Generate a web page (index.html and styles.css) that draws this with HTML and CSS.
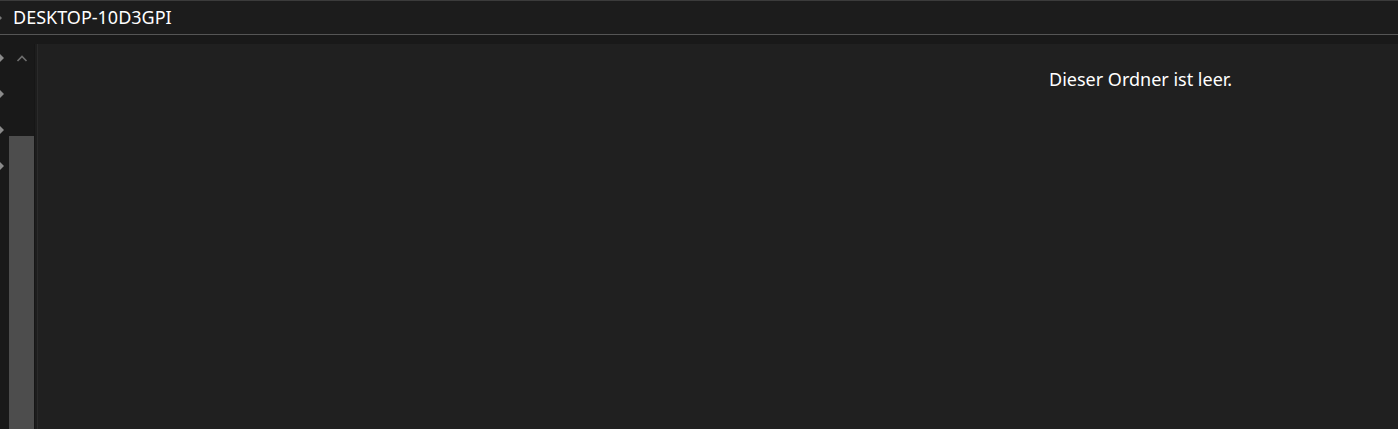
FILE: index.html
```html
<!DOCTYPE html>
<html lang="de">
<head>
<meta charset="utf-8">
<link rel="stylesheet" href="styles.css">
</head>
<body>
<div class="window">
  <div class="titlebar">
    <span class="edge-arrow title-arrow"></span>
    <span class="title">DESKTOP-10D3GPI</span>
  </div>
  <div class="gap"></div>
  <div class="main">
    <div class="nav">
      <div class="tree">
        <span class="tri"></span>
        <span class="tri"></span>
        <span class="tri"></span>
        <span class="tri"></span>
      </div>
      <div class="scroll">
        <svg class="up" width="12" height="8" viewBox="0 0 12 8"><path d="M1.5 7 L6 2.5 L10.5 7" fill="none" stroke="#6e6e6e" stroke-width="1.6"/></svg>
        <div class="thumb"></div>
      </div>
      <div class="divider"></div>
    </div>
    <div class="content">
      <p class="empty">Dieser Ordner ist leer.</p>
    </div>
  </div>
</div>
</body>
</html>
```
FILE: styles.css
```css
html, body { margin: 0; padding: 0; background: #202020; overflow: hidden; }
.window { width: 1398px; height: 429px; display: flex; flex-direction: column; font-family: "Noto Sans", "Open Sans", sans-serif; }
.titlebar { height: 33px; border-top: 1px solid #3b3b3b; border-bottom: 1px solid #555555; background: #1c1c1c; display: flex; align-items: center; position: relative; }
.title { color: #ffffff; font-size: 18px; line-height: 20px; margin-left: 13px; margin-top: -1px; }
.title-arrow { position: absolute; left: 0; top: 15px; width: 0; height: 0; border-top: 2px solid transparent; border-bottom: 2px solid transparent; border-left: 2px solid #777; }
.gap { height: 9px; background: #191919; }
.main { flex: 1; display: flex; }
.nav { width: 38px; display: flex; background: #191919; }
.tree { width: 9px; display: flex; flex-direction: column; padding-top: 10px; gap: 28px; }
.tri { display: block; width: 0; height: 0; border-top: 4px solid transparent; border-bottom: 4px solid transparent; border-left: 4px solid #8a8a8a; margin-left: 0; }
.scroll { width: 25px; display: flex; flex-direction: column; align-items: center; }
.up { margin-top: 10px; }
.thumb { margin-top: 74px; width: 25px; flex: 1; background: #4d4d4d; }
.divider { width: 4px; background: #1d1d1d; border-left: 1px solid #161616; box-sizing: border-box; border-right: 1px solid #2a2a2a; }
.content { flex: 1; background: #202020; position: relative; }
.empty { margin: 0; position: absolute; left: 1011px; top: 23px; color: #ffffff; font-size: 18px; line-height: 24px; }
```
